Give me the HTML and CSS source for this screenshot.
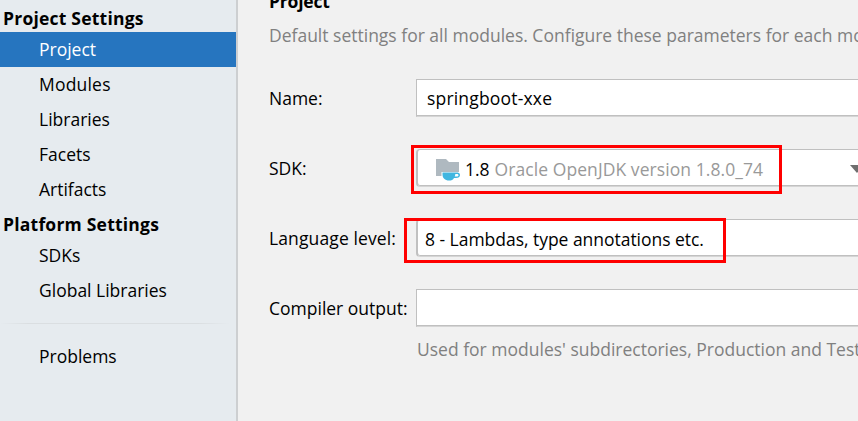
FILE: index.html
```html
<!DOCTYPE html>
<html lang="en">
<head>
    <meta charset="UTF-8">
    <meta name="viewport" content="width=device-width, initial-scale=1.0">
    <title>Project Structure</title>
    <link rel="stylesheet" href="styles.css">
</head>
<body>
    <div class="window">
        <nav class="sidebar">
            <h2 class="group-title">Project Settings</h2>
            <a class="item selected">Project</a>
            <a class="item modules">Modules</a>
            <a class="item">Libraries</a>
            <a class="item">Facets</a>
            <a class="item">Artifacts</a>
            <h2 class="group-title platform">Platform Settings</h2>
            <a class="item">SDKs</a>
            <a class="item">Global Libraries</a>
            <div class="separator"></div>
            <a class="item">Problems</a>
        </nav>

        <main class="content">
            <h1 class="title">Project</h1>
            <p class="description">Default settings for all modules. Configure these parameters for each module</p>

            <div class="row">
                <label class="label">Name:</label>
                <div class="field name"><span>springboot-xxe</span></div>
            </div>
            <div class="row">
                <label class="label">SDK:</label>
                <div class="field combo sdk">
                    <svg class="icon" width="24" height="22" viewBox="0 0 24 22">
                        <path fill="#afb9c0" d="M0 0h10l3 3h10v10H5.500v4H0z"/>
                        <path fill="#40b6e0" fill-rule="evenodd" d="M6.500 13.500H20c2.500 0 4 .5 4 2.500s-1.500 3-4 3h-2c-1 2-2.500 2.500-5 2.500-4 0-6.500-2.500-6.500-6zM19.300 15c0 1-.2 1.800-.6 2.500h1.800c1.300 0 2-.5 2-1.300s-.7-1.200-2-1.200z"/>
                    </svg>
                    <span class="version">1.8</span>
                    <span class="vendor">Oracle OpenJDK version 1.8.0_74</span>
                    <svg class="arrow" width="14" height="8" viewBox="0 0 14 8">
                        <path fill="#6e6e6e" d="M0 0h14L7 8z"/>
                    </svg>
                </div>
                <div class="mark mark-sdk"></div>
            </div>
            <div class="row">
                <label class="label level-label">Language level:</label>
                <div class="field combo level"><span>8 - Lambdas, type annotations etc.</span></div>
                <div class="mark mark-level"></div>
            </div>
            <div class="row">
                <label class="label">Compiler output:</label>
                <div class="field"></div>
            </div>
            <p class="hint">Used for modules' subdirectories, Production and Test</p>
        </main>
    </div>
</body>
</html>
```
FILE: styles.css
```css
* {
    box-sizing: border-box;
}
body {
    margin: 0;
    overflow: hidden;
    font-family: "Open Sans", "Noto Sans", sans-serif;
    font-size: 17.5px;
    line-height: 24px;
    color: #000;
    background: #f1f1f1;
}
.window {
    display: flex;
    width: 100vw;
    height: 100vh;
    overflow: hidden;
}
.sidebar {
    flex: none;
    width: 238px;
    background: #e6ebef;
    border-right: 2px solid #cdcfd1;
}
.group-title {
    height: 32px;
    margin: 0;
    padding: 6px 0 0 3px;
    font-size: 17.5px;
    font-weight: 700;
    letter-spacing: 0.22px;
}
.platform {
    height: 31px;
    padding-top: 5px;
}
.item {
    display: flex;
    align-items: center;
    height: 35px;
    padding: 0 0 2px 39px;
}
.modules {
    letter-spacing: 0.2px;
}
.selected {
    color: #fff;
    background: #2675bf;
}
.separator {
    height: 1px;
    margin: 15px 6px 15px 0;
    background: linear-gradient(to right, #e6ebef, #dadee1 28px, #dadee1 198px, #e6ebef);
}
.content {
    flex: 1;
    min-width: 0;
    padding-left: 31px;
    overflow: hidden;
    white-space: nowrap;
}
.title {
    height: 24px;
    margin: -11px 0 0;
    font-size: 17.5px;
    font-weight: 700;
    letter-spacing: -0.2px;
}
.description {
    margin: 10px 0 32px;
    color: #808080;
}
.row {
    position: relative;
    display: flex;
    height: 38px;
    margin-bottom: 32px;
}
.label {
    flex: none;
    width: 147px;
    padding-top: 7px;
}
.level-label {
    letter-spacing: 0.12px;
}
.field {
    display: flex;
    flex: none;
    align-items: center;
    width: 480px;
    height: 38px;
    padding-left: 10px;
    background: #fff;
    border: 1px solid #c0c0c0;
    border-bottom-color: #d5d5d5;
    box-shadow: inset 0 -1px #c0c0c0;
}
.name {
    letter-spacing: 0.18px;
}
.combo {
    padding-left: 7px;
    border-left-width: 2px;
    border-radius: 4px;
}
.level {
    padding-top: 2px;
    letter-spacing: -0.03px;
}
.sdk {
    padding: 2px 0 0 18px;
}
.icon {
    flex: none;
    margin: 2px 5px 0 0;
}
.version {
    margin-right: 5px;
}
.vendor {
    width: 355px;
    color: #999;
    letter-spacing: 0.07px;
}
.mark {
    position: absolute;
    border: 3px solid #f00;
}
.mark-sdk {
    top: -4px;
    left: 142px;
    width: 371px;
    height: 49px;
}
.mark-level {
    top: -1px;
    left: 135px;
    width: 322px;
    height: 45px;
}
.hint {
    margin: -22px 0 0 148px;
    color: #808080;
}
```
